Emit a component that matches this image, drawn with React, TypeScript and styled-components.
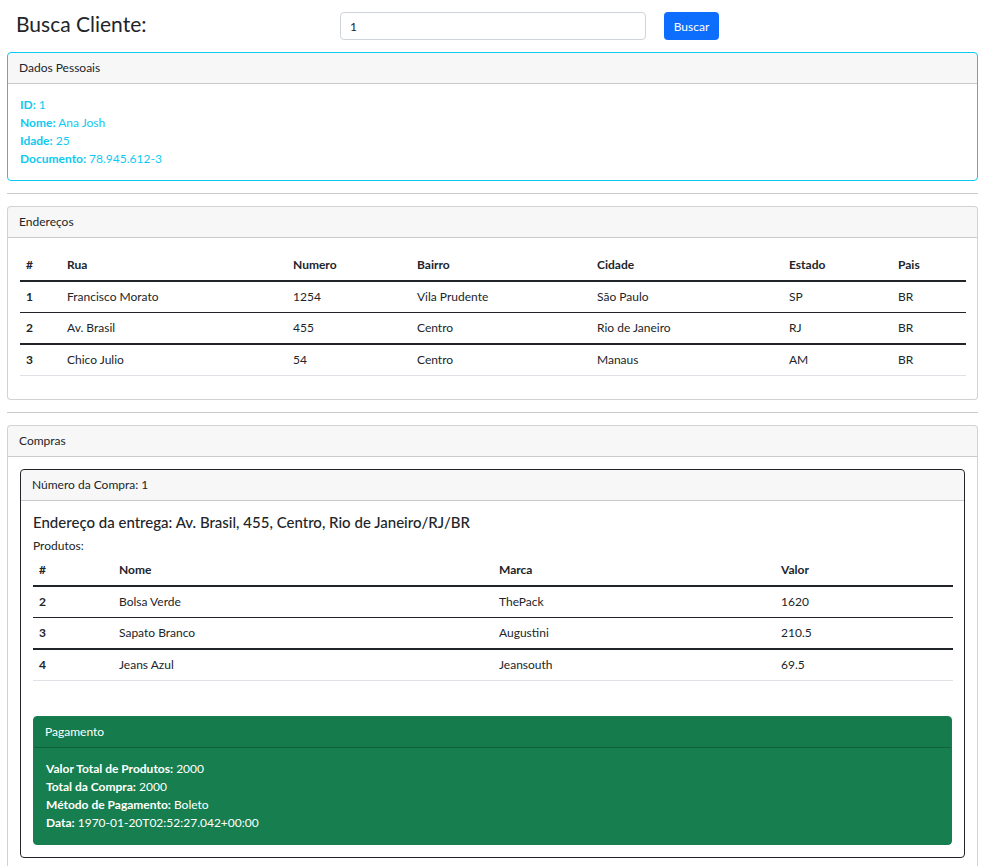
import styled, { createGlobalStyle } from "styled-components";

const GlobalStyle = createGlobalStyle`
  * { box-sizing: border-box; }
  body {
    margin: 0;
    background: #fff;
    font-family: Lato, "Noto Sans", sans-serif;
    font-size: 12px;
    line-height: 1.5;
    color: #212529;
  }
`;

type Rule = "thin" | "thick" | "light";

const enderecos = [
  { id: 1, rua: "Francisco Morato", numero: "1254", bairro: "Vila Prudente", cidade: "São Paulo", estado: "SP", pais: "BR" },
  { id: 2, rua: "Av. Brasil", numero: "455", bairro: "Centro", cidade: "Rio de Janeiro", estado: "RJ", pais: "BR" },
  { id: 3, rua: "Chico Julio", numero: "54", bairro: "Centro", cidade: "Manaus", estado: "AM", pais: "BR" },
];

const produtos = [
  { id: 2, nome: "Bolsa Verde", marca: "ThePack", valor: "1620" },
  { id: 3, nome: "Sapato Branco", marca: "Augustini", valor: "210.5" },
  { id: 4, nome: "Jeans Azul", marca: "Jeansouth", valor: "69.5" },
];

// dividers alternate because of the 0.75 zoom rounding in the original
const rules: Rule[] = ["thin", "thick", "light"];

export default function App() {
  return (
    <>
      <GlobalStyle />
      <Page>
        <SearchBar>
          <Title>Busca Cliente:</Title>
          <SearchInput defaultValue="1" />
          <SearchButton type="button">Buscar</SearchButton>
        </SearchBar>

        <Card $border="#0dcaf0">
          <CardHeader>Dados Pessoais</CardHeader>
          <CardBody>
            <InfoList $color="#0dcaf0">
              <div><b>ID:</b> 1</div>
              <div><b>Nome:</b> Ana Josh</div>
              <div><b>Idade:</b> 25</div>
              <div><b>Documento:</b> 78.945.612-3</div>
            </InfoList>
          </CardBody>
        </Card>

        <Divider />

        <Card>
          <CardHeader>Endereços</CardHeader>
          <CardBody>
            <Table>
              <colgroup>
                {[41, 226, 124, 180, 192, 109, 74].map((w, i) => (
                  <Col key={i} $w={w} />
                ))}
              </colgroup>
              <thead>
                <tr>
                  <Th>#</Th>
                  <Th>Rua</Th>
                  <Th>Numero</Th>
                  <Th>Bairro</Th>
                  <Th>Cidade</Th>
                  <Th>Estado</Th>
                  <Th>Pais</Th>
                </tr>
              </thead>
              <tbody>
                {enderecos.map((e, i) => (
                  <Tr key={e.id} $rule={rules[i]}>
                    <Td $strong>{e.id}</Td>
                    <Td>{e.rua}</Td>
                    <Td>{e.numero}</Td>
                    <Td>{e.bairro}</Td>
                    <Td>{e.cidade}</Td>
                    <Td>{e.estado}</Td>
                    <Td>{e.pais}</Td>
                  </Tr>
                ))}
              </tbody>
            </Table>
          </CardBody>
        </Card>

        <Divider />

        <Card>
          <CardHeader>Compras</CardHeader>
          <CardBody>
            <Card $border="#212529">
              <CardHeader>Número da Compra: 1</CardHeader>
              <CardBody>
                <Delivery>Endereço da entrega: Av. Brasil, 455, Centro, Rio de Janeiro/RJ/BR</Delivery>
                <div>Produtos:</div>
                <Table>
                  <colgroup>
                    {[80, 380, 282, 178].map((w, i) => (
                      <Col key={i} $w={w} />
                    ))}
                  </colgroup>
                  <thead>
                    <tr>
                      <Th>#</Th>
                      <Th>Nome</Th>
                      <Th>Marca</Th>
                      <Th>Valor</Th>
                    </tr>
                  </thead>
                  <tbody>
                    {produtos.map((p, i) => (
                      <Tr key={p.id} $rule={rules[i]}>
                        <Td $strong>{p.id}</Td>
                        <Td>{p.nome}</Td>
                        <Td>{p.marca}</Td>
                        <Td>{p.valor}</Td>
                      </Tr>
                    ))}
                  </tbody>
                </Table>

                <PaymentCard $border="#177f4f" $bg="#177f4f" $color="#fff">
                  <CardHeader $line="rgba(0,0,0,0.2)">Pagamento</CardHeader>
                  <CardBody>
                    <InfoList $color="#fff">
                      <div><b>Valor Total de Produtos:</b> 2000</div>
                      <div><b>Total da Compra:</b> 2000</div>
                      <div><b>Método de Pagamento:</b> Boleto</div>
                      <div><b>Data:</b> 1970-01-20T02:52:27.042+00:00</div>
                    </InfoList>
                  </CardBody>
                </PaymentCard>
              </CardBody>
            </Card>
          </CardBody>
        </Card>
      </Page>
    </>
  );
}

const Page = styled.div`
  padding: 12px 16px 24px 7px;
`;

const SearchBar = styled.div`
  display: flex;
  align-items: center;
  height: 28px;
  margin-bottom: 12px;
`;

const Title = styled.h2`
  width: 333px;
  margin: 0;
  padding-left: 9px;
  font-size: 21px;
  font-weight: 400;
  line-height: 1.2;
  color: #212529;
  position: relative;
  top: -2px;
`;

const SearchInput = styled.input`
  width: 306px;
  height: 28px;
  padding: 0 9px;
  border: 1px solid #ced4da;
  border-radius: 4px;
  font-family: inherit;
  font-size: 12px;
  color: #212529;
`;

const SearchButton = styled.button`
  margin-left: 18px;
  width: 55px;
  height: 28px;
  border: none;
  border-radius: 4px;
  background: #0d6efd;
  color: #fff;
  font-family: inherit;
  font-size: 12px;
`;

const Card = styled.div<{ $border?: string; $bg?: string; $color?: string }>`
  border: 1px solid ${({ $border }) => $border || "rgba(0,0,0,0.175)"};
  border-radius: 4px;
  background: ${({ $bg }) => $bg || "#fff"};
  color: ${({ $color }) => $color || "#212529"};
  overflow: hidden;
`;

const PaymentCard = styled(Card)`
  margin-top: 35px;
`;

const CardHeader = styled.div<{ $line?: string }>`
  padding: 6px 11px;
  line-height: 18px;
  background: rgba(0, 0, 0, 0.03);
  border-bottom: 1px solid ${({ $line }) => $line || "rgba(0,0,0,0.175)"};
`;

const CardBody = styled.div`
  padding: 12px;
`;

const InfoList = styled.div<{ $color: string }>`
  color: ${({ $color }) => $color};
  line-height: 18px;
`;

const Divider = styled.hr`
  margin: 12px 0;
  border: 0;
  border-top: 1px solid #c9cacb;
`;

const Table = styled.table`
  width: 100%;
  table-layout: fixed;
  border-collapse: collapse;
  margin-bottom: 11px;
`;

const Col = styled.col<{ $w: number }>`
  width: ${({ $w }) => $w}px;
`;

const Th = styled.th`
  padding: 6px;
  text-align: left;
  font-weight: 700;
  line-height: 18px;
  border-bottom: 2px solid #212529;
`;

const ruleStyle: Record<Rule, string> = {
  thin: "1px solid #212529",
  thick: "2px solid #212529",
  light: "1px solid #dee2e6",
};

const Tr = styled.tr<{ $rule: Rule }>`
  & > td {
    border-bottom: ${({ $rule }) => ruleStyle[$rule]};
  }
`;

const Td = styled.td<{ $strong?: boolean }>`
  padding: 6px;
  line-height: 18px;
  font-weight: ${({ $strong }) => ($strong ? 700 : 400)};
`;

const Delivery = styled.h5`
  margin: 0 0 6px;
  font-size: 15px;
  font-weight: 500;
  line-height: 1.2;
`;
